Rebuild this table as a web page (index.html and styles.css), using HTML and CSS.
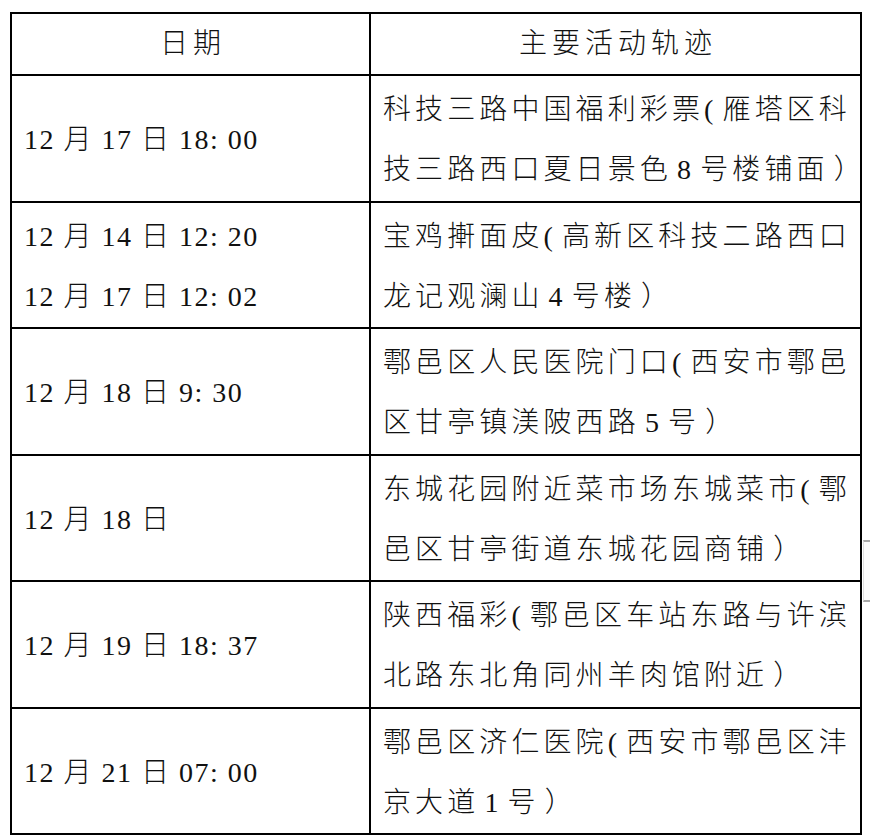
FILE: index.html
```html
<!DOCTYPE html>
<html lang="zh-CN">
<head>
<meta charset="utf-8">
<title>活动轨迹</title>
<link rel="stylesheet" href="styles.css">
</head>
<body>
<div class="sheet">
  <div class="cell head">日期</div>
  <div class="cell head">主要活动轨迹</div>

  <div class="cell date">12 月 17 日 18: 00</div>
  <div class="cell place">科技三路中国福利彩票( 雁塔区科<br>技三路西口夏日景色 8 号楼铺面 ）</div>

  <div class="cell date">12 月 14 日 12: 20<br>12 月 17 日 12: 02</div>
  <div class="cell place">宝鸡搟面皮( 高新区科技二路西口<br>龙记观澜山 4 号楼 ）</div>

  <div class="cell date">12 月 18 日 9: 30</div>
  <div class="cell place">鄠邑区人民医院门口( 西安市鄠邑<br>区甘亭镇渼陂西路 5 号 ）</div>

  <div class="cell date">12 月 18 日</div>
  <div class="cell place">东城花园附近菜市场东城菜市( 鄠<br>邑区甘亭街道东城花园商铺 ）</div>

  <div class="cell date">12 月 19 日 18: 37</div>
  <div class="cell place">陕西福彩( 鄠邑区车站东路与许滨<br>北路东北角同州羊肉馆附近 ）</div>

  <div class="cell date">12 月 21 日 07: 00</div>
  <div class="cell place">鄠邑区济仁医院( 西安市鄠邑区沣<br>京大道 1 号 ）</div>
</div>
<div class="side-widget"></div>
</body>
</html>
```
FILE: styles.css
```css
html, body {
  margin: 0;
  padding: 0;
  background: #ffffff;
}

body {
  font-family: "Liberation Serif", "Noto Sans CJK SC", serif;
  font-size: 28px;
  color: #111111;
  width: 870px;
  height: 840px;
  position: relative;
  overflow: hidden;
}

.sheet {
  box-sizing: border-box;
  margin: 12px 0 0 10px;
  width: 852px;
  display: grid;
  grid-template-columns: 359px 491px;
  grid-template-rows: 62px repeat(6, 126.5px);
  border-left: 2px solid #000;
  border-top: 2px solid #000;
}

.cell {
  box-sizing: border-box;
  border-right: 2px solid #000;
  border-bottom: 2px solid #000;
  display: flex;
  align-items: center;
  line-height: 60px;
  font-weight: 300;
}

.head {
  justify-content: center;
  letter-spacing: 5px;
  padding-left: 5px;
}

.date {
  padding-left: 12px;
  padding-top: 4px;
  letter-spacing: 1.5px;
  white-space: nowrap;
}

.place {
  padding-left: 12px;
  padding-top: 4px;
  letter-spacing: 4.1px;
  word-spacing: -6px;
  white-space: nowrap;
}

.side-widget {
  position: absolute;
  left: 863px;
  top: 540px;
  width: 10px;
  height: 58px;
  border-top: 2px solid #a8a8a8;
  border-bottom: 2px solid #a8a8a8;
  border-left: 1px solid #dcdcdc;
  background: #fafafa;
}
```
